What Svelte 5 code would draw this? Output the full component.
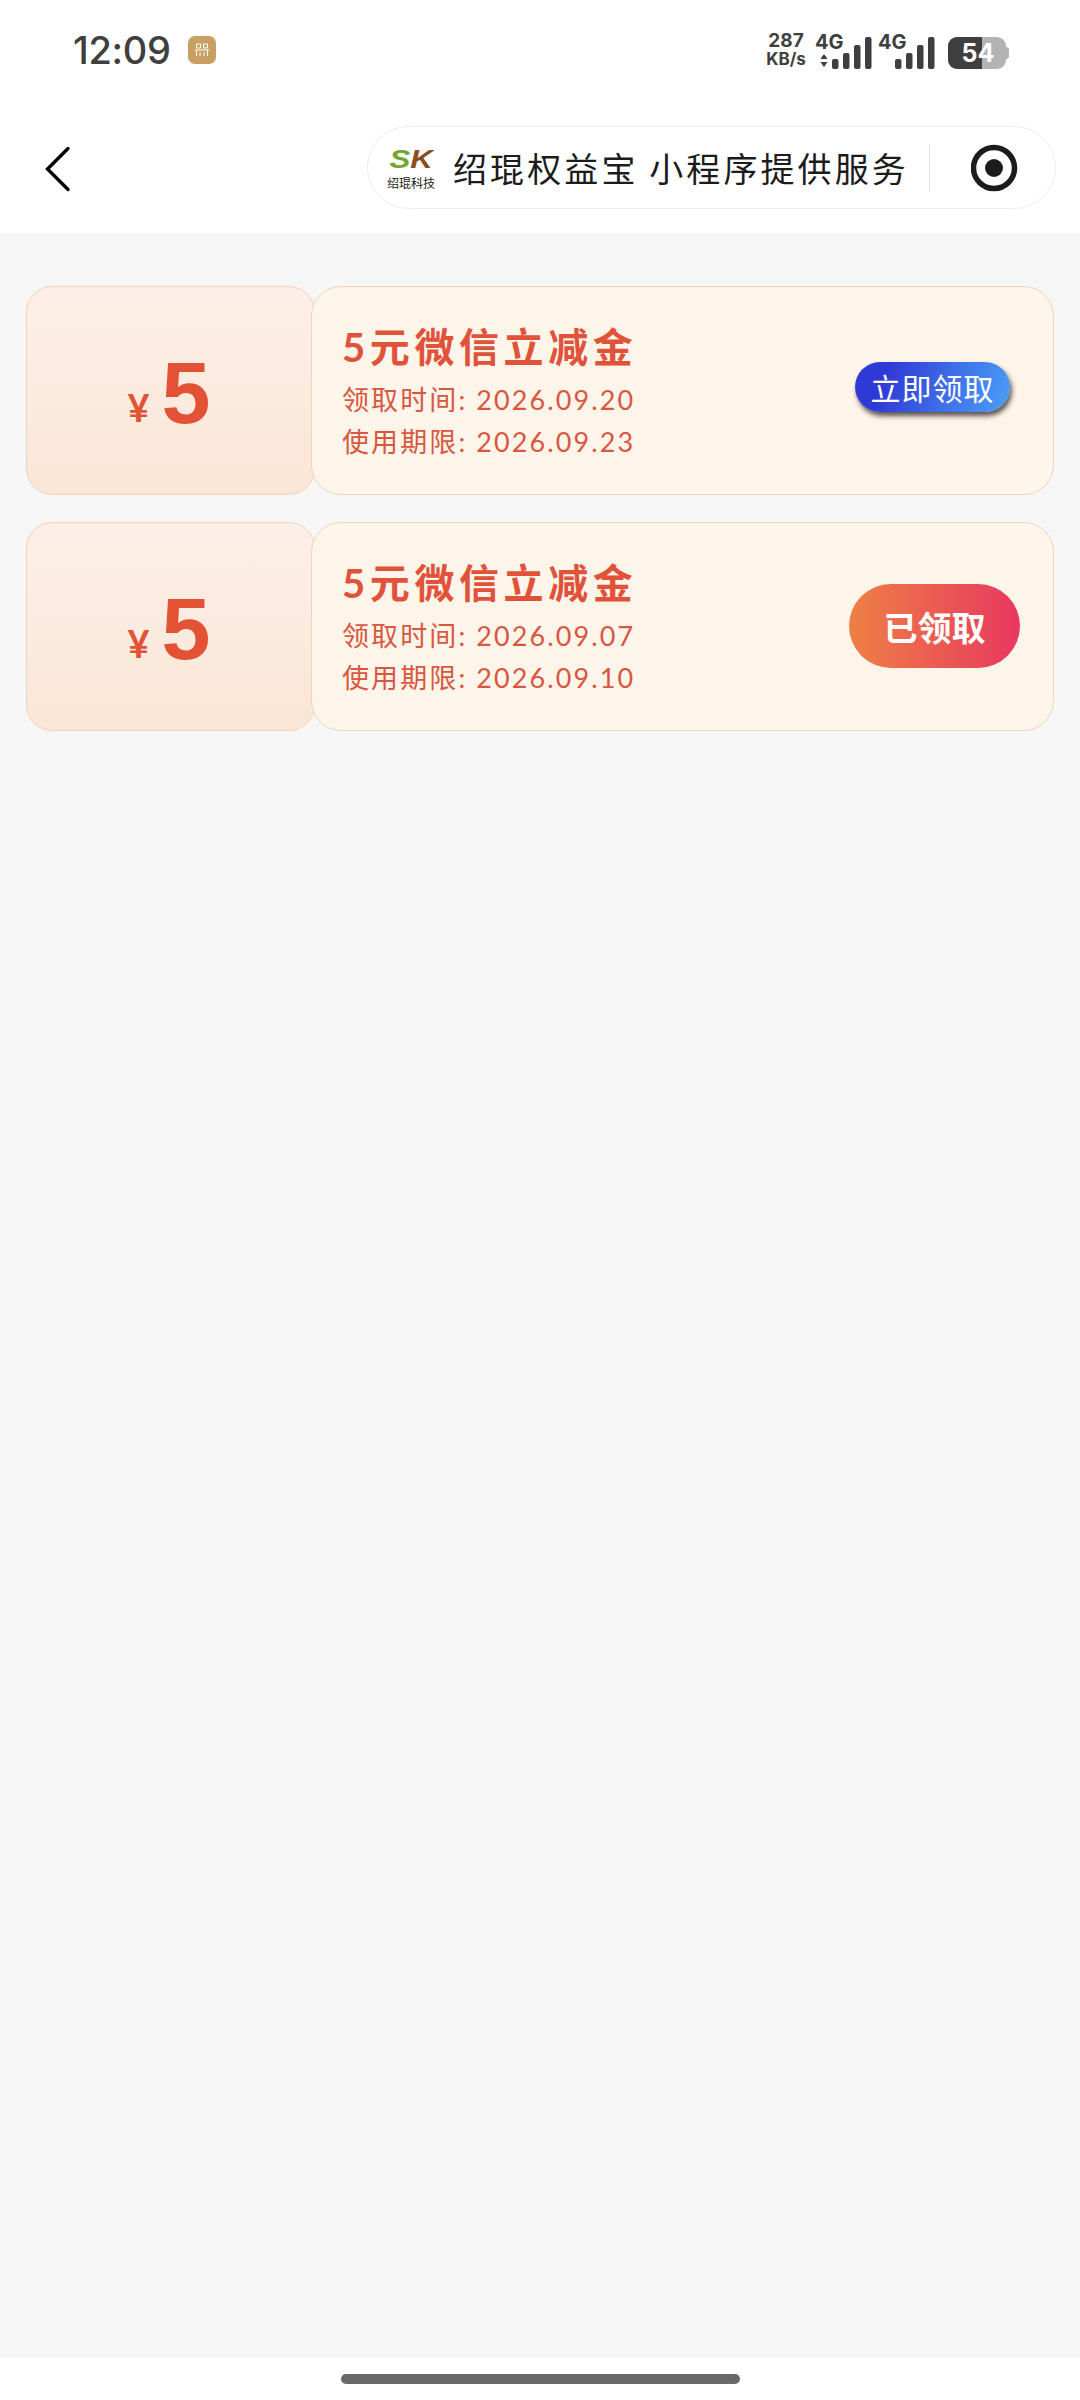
<script lang="ts">
  interface Coupon {
    amount: number;
    title: string;
    received: string;
    expires: string;
    claimed: boolean;
  }

  const coupons: Coupon[] = [
    { amount: 5, title: '5元微信立减金', received: '2026.09.20', expires: '2026.09.23', claimed: false },
    { amount: 5, title: '5元微信立减金', received: '2026.09.07', expires: '2026.09.10', claimed: true }
  ];

  const bars = [
    { x: 0, h: 10 },
    { x: 11, h: 16 },
    { x: 22, h: 24 },
    { x: 33, h: 32 }
  ];
</script>

{#snippet signal()}
  <svg class="bars" width="40" height="32" viewBox="0 0 40 32">
    {#each bars as b}
      <rect x={b.x} y={32 - b.h} width="6.5" height={b.h} rx="2" fill="#3f3f3f" />
    {/each}
  </svg>
{/snippet}

<div class="page">
  <header class="top">
    <div class="status">
      <div class="clock">
        <span class="time">12:09</span>
        <span class="badge">
          <svg width="16" height="16" viewBox="0 0 16 16" fill="none" stroke="#fff" stroke-width="1">
            <path d="M2.5 2h4v4h-4zM9.5 2h4v4h-4zM1 8h14M2.5 8v6M13.5 8v6M6 10v4M10 10v4" />
          </svg>
        </span>
      </div>
      <div class="icons">
        <div class="speed"><span>287</span><span>KB/s</span></div>
        <div class="net first">
          <div class="net-label">
            <span>4G</span>
            <svg width="8" height="13" viewBox="0 0 8 13" fill="#3f3f3f"><path d="M4 0l3.6 5H.4zM4 13L.4 8h7.2z" /></svg>
          </div>
          {@render signal()}
        </div>
        <div class="net second">
          <div class="net-label"><span>4G</span></div>
          {@render signal()}
        </div>
        <div class="battery">
          <div class="cell"><div class="fill"></div><span>54</span></div>
          <div class="tail"></div>
        </div>
      </div>
    </div>

    <nav class="nav">
      <svg class="back" width="26" height="46" viewBox="0 0 26 46" fill="none" stroke="#000" stroke-width="3.4" stroke-linecap="round" stroke-linejoin="miter">
        <path d="M23 2.5 2.5 23 23 43.5" />
      </svg>
      <div class="capsule">
        <div class="logo">
          <div class="mark"><span class="s">S</span><span class="k">K</span></div>
          <div class="mark-name">绍琨科技</div>
        </div>
        <span class="provider">绍琨权益宝 小程序提供服务</span>
        <div class="divider"></div>
        <svg class="target" width="48" height="48" viewBox="0 0 48 48">
          <circle cx="23" cy="24" r="20.5" fill="none" stroke="#1c1c1c" stroke-width="5.5" />
          <circle cx="23" cy="24" r="9" fill="#1c1c1c" />
        </svg>
      </div>
    </nav>
  </header>

  <main class="list">
    {#each coupons as c}
      <div class="coupon">
        <div class="value">
          <span class="yen">¥</span><span class="amount">{c.amount}</span>
        </div>
        <div class="detail">
          <div class="info">
            <div class="title">{c.title}</div>
            <div class="line">领取时间: {c.received}</div>
            <div class="line">使用期限: {c.expires}</div>
          </div>
          {#if c.claimed}
            <div class="btn done">已领取</div>
          {:else}
            <div class="btn claim">立即领取</div>
          {/if}
        </div>
      </div>
    {/each}
  </main>

  <footer class="home"><div class="home-bar"></div></footer>
</div>

<style>
  :global(body) {
    margin: 0;
    background: #f6f6f6;
  }

  .page {
    height: 2400px;
    display: flex;
    flex-direction: column;
    font-family: "Lato", "Noto Sans CJK SC", sans-serif;
  }

  .top {
    background: #fff;
    height: 233px;
    flex-shrink: 0;
  }

  .status {
    height: 100px;
    display: flex;
    justify-content: space-between;
    align-items: center;
    padding: 0 71px 0 73px;
    color: #3f3f3f;
  }

  .clock {
    display: flex;
    align-items: center;
    gap: 17px;
  }

  .time {
    font-family: "Inter", sans-serif;
    font-size: 38px;
    font-weight: 500;
    line-height: 40px;
    letter-spacing: -0.3px;
  }

  .badge {
    width: 28px;
    height: 28px;
    background: #c9a063;
    border-radius: 7px;
    display: flex;
    align-items: center;
    justify-content: center;
  }

  .icons {
    display: flex;
    align-items: flex-end;
    height: 38px;
  }

  .speed {
    display: flex;
    flex-direction: column;
    align-items: center;
    width: 44px;
    font-family: "Inter", sans-serif;
    font-size: 17px;
    font-weight: 700;
    line-height: 19px;
    white-space: nowrap;
  }

  .speed span:first-child {
    font-size: 19px;
  }

  .net {
    display: flex;
    align-items: flex-end;
  }

  .net.first {
    margin-left: 7px;
  }

  .net.second {
    margin-left: 6px;
  }

  .net-label {
    width: 17px;
    height: 38px;
    display: flex;
    flex-direction: column;
    align-items: flex-start;
    font-family: "Inter", sans-serif;
    font-size: 20px;
    font-weight: 700;
    line-height: 22px;
  }

  .net-label svg {
    margin: 1px 0 0 5px;
  }

  .bars {
    display: block;
    flex-shrink: 0;
  }

  .battery {
    display: flex;
    align-items: center;
    margin-left: 13px;
  }

  .cell {
    width: 58px;
    height: 32px;
    border-radius: 9px;
    background: #b3b3b3;
    overflow: hidden;
    position: relative;
    display: flex;
    align-items: center;
    justify-content: center;
    color: #fff;
    font-family: "Inter", sans-serif;
    font-size: 25px;
    font-weight: 700;
  }

  .fill {
    position: absolute;
    left: 0;
    top: 0;
    bottom: 0;
    width: 34px;
    background: #3f3f3f;
  }

  .cell span {
    position: relative;
    margin-left: 2px;
  }

  .tail {
    width: 3px;
    height: 12px;
    background: #b3b3b3;
    border-radius: 0 3px 3px 0;
  }

  .nav {
    height: 133px;
    display: flex;
    justify-content: space-between;
    align-items: flex-start;
    padding: 26px 24px 0 45px;
    box-sizing: border-box;
  }

  .back {
    margin-top: 20px;
  }

  .capsule {
    width: 689px;
    height: 83px;
    box-sizing: border-box;
    border: 1.5px solid #ececec;
    border-radius: 42px;
    display: flex;
    align-items: center;
    padding-left: 18px;
  }

  .logo {
    width: 50px;
    display: flex;
    flex-direction: column;
    align-items: center;
  }

  .mark {
    display: flex;
    font-family: "Liberation Sans", sans-serif;
    font-size: 26px;
    font-weight: 700;
    font-style: italic;
    line-height: 30px;
    transform: scaleX(1.2);
  }

  .s {
    color: #72a82e;
  }

  .k {
    color: #8a4f1c;
  }

  .mark-name {
    font-family: "Noto Sans CJK SC", sans-serif;
    font-size: 12px;
    line-height: 18px;
    color: #222;
    white-space: nowrap;
  }

  .provider {
    font-family: "Noto Sans CJK SC", sans-serif;
    font-size: 34px;
    letter-spacing: 3.1px;
    color: #1c1c1c;
    margin-left: 17px;
    white-space: nowrap;
    width: 471px;
  }

  .divider {
    width: 1px;
    height: 48px;
    background: #e2e2e2;
    flex-shrink: 0;
    margin-left: 5px;
  }

  .target {
    flex-shrink: 0;
    margin-left: 41px;
  }

  .list {
    flex: 1;
    padding: 53px 26px 0;
    display: flex;
    flex-direction: column;
    gap: 27px;
  }

  .coupon {
    display: flex;
    height: 209px;
    color: #e35235;
  }

  .value {
    width: 289px;
    box-sizing: border-box;
    flex-shrink: 0;
    border: 1.5px solid #f4d3bb;
    border-radius: 26px;
    background: linear-gradient(180deg, #fdefe8, #fae6d6);
    display: flex;
    align-items: center;
    justify-content: center;
    padding-right: 3px;
  }

  .yen {
    font-size: 38px;
    font-weight: 700;
    margin: 32px 12px 0 0;
  }

  .amount {
    font-family: "Liberation Sans", sans-serif;
    font-size: 88px;
    font-weight: 700;
    line-height: 90px;
    margin-top: 5px;
  }

  .detail {
    flex: 1;
    margin-left: -4px;
    position: relative;
    box-sizing: border-box;
    border: 1.5px solid #f4d3bb;
    border-radius: 30px;
    background: #fdf4ea;
    display: flex;
    align-items: center;
    justify-content: space-between;
    padding-left: 30px;
  }

  .info {
    margin-top: 5px;
  }

  .title {
    font-size: 40px;
    font-weight: 700;
    line-height: 46px;
    letter-spacing: 4.6px;
    margin-bottom: 9px;
    color: #e0533a;
  }

  .line {
    font-size: 27px;
    line-height: 42px;
    letter-spacing: 2.1px;
    color: #d9573e;
    white-space: nowrap;
  }

  .btn {
    color: #fff;
    font-family: "Noto Sans CJK SC", sans-serif;
    display: flex;
    align-items: center;
    justify-content: center;
    white-space: nowrap;
  }

  .claim {
    width: 155px;
    height: 50px;
    border-radius: 25px;
    margin-right: 43px;
    margin-bottom: 7px;
    font-size: 30px;
    letter-spacing: 1px;
    background: linear-gradient(110deg, #2f39d6 20%, #3f6fe8 60%, #4aa0f6);
    box-shadow: 2px 4px 5px rgba(40, 30, 30, 0.75);
  }

  .done {
    width: 171px;
    height: 84px;
    border-radius: 42px;
    margin-right: 33px;
    margin-bottom: 1px;
    font-size: 34px;
    font-weight: 700;
    background: linear-gradient(90deg, #ee8045, #e8385f);
  }

  .home {
    height: 42px;
    background: #fff;
    flex-shrink: 0;
    display: flex;
    justify-content: center;
    padding-top: 16px;
    box-sizing: border-box;
  }

  .home-bar {
    width: 399px;
    height: 10px;
    border-radius: 5px;
    background: #696969;
  }
</style>
